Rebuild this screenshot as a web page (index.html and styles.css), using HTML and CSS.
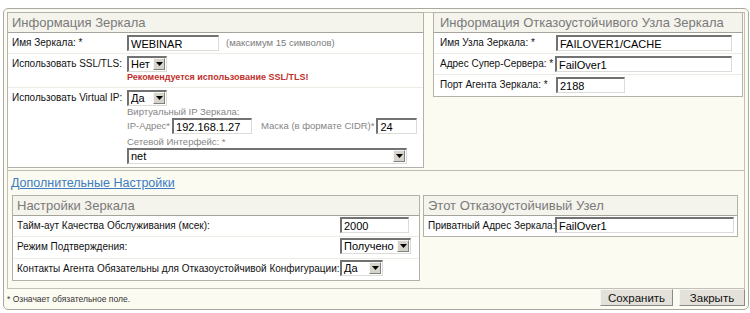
FILE: index.html
```html
<!DOCTYPE html>
<html>
<head>
<meta charset="utf-8">
<link rel="stylesheet" href="styles.css">
</head>
<body>
<div class="panel">
  <div class="box">
    <div class="top">
      <div class="fs fs-mirror">
        <div class="fs-head">Информация Зеркала</div>
        <div class="row r1">
          <div class="lbl">Имя Зеркала: *</div>
          <div class="val"><input class="inp w-name" type="text" value="WEBINAR"><span class="hint">(максимум 15 символов)</span></div>
        </div>
        <div class="row r2">
          <div class="lbl">Использовать SSL/TLS:</div>
          <div class="val">
            <span class="sel w-small"><span class="sel-txt">Нет</span><span class="sel-btn"><svg width="7" height="4" viewBox="0 0 7 4"><polygon points="0,0 7,0 3.5,4" fill="#000"/></svg></span></span>
            <div class="warn">Рекомендуется использование SSL/TLS!</div>
          </div>
        </div>
        <div class="row r3">
          <div class="lbl">Использовать Virtual IP:</div>
          <div class="val">
            <span class="sel w-small"><span class="sel-txt">Да</span><span class="sel-btn"><svg width="7" height="4" viewBox="0 0 7 4"><polygon points="0,0 7,0 3.5,4" fill="#000"/></svg></span></span>
            <div class="sub">Виртуальный IP Зеркала:</div>
            <div class="ip-line">
              <span class="sub">IP-Адрес*</span>
              <input class="inp w-ip" type="text" value="192.168.1.27">
              <span class="sub mask">Маска (в формате CIDR)*</span>
              <input class="inp w-mask" type="text" value="24">
            </div>
            <div class="sub net-lbl">Сетевой Интерфейс: *</div>
            <span class="sel w-net"><span class="sel-txt">net</span><span class="sel-btn"><svg width="7" height="4" viewBox="0 0 7 4"><polygon points="0,0 7,0 3.5,4" fill="#000"/></svg></span></span>
          </div>
        </div>
      </div>

      <div class="fs fs-failover">
        <div class="fs-head">Информация Отказоустойчивого Узла Зеркала</div>
        <div class="row">
          <div class="lbl">Имя Узла Зеркала: *</div>
          <div class="val"><input class="inp w-fo" type="text" value="FAILOVER1/CACHE"></div>
        </div>
        <div class="row">
          <div class="lbl">Адрес Супер-Сервера: *</div>
          <div class="val"><input class="inp w-fo2" type="text" value="FailOver1"></div>
        </div>
        <div class="row last">
          <div class="lbl">Порт Агента Зеркала: *</div>
          <div class="val"><input class="inp w-port" type="text" value="2188"></div>
        </div>
      </div>
    </div>

    <div class="more">
      <a class="more-link" href="#">Дополнительные Настройки</a>
      <div class="more-row">
        <div class="fs fs-settings">
          <div class="fs-head">Настройки Зеркала</div>
          <div class="row">
            <div class="lbl">Тайм-аут Качества Обслуживания (мсек):</div>
            <div class="val"><input class="inp w-port" type="text" value="2000"></div>
          </div>
          <div class="row">
            <div class="lbl">Режим Подтверждения:</div>
            <div class="val"><span class="sel w-mode"><span class="sel-txt">Получено</span><span class="sel-btn"><svg width="7" height="4" viewBox="0 0 7 4"><polygon points="0,0 7,0 3.5,4" fill="#000"/></svg></span></span></div>
          </div>
          <div class="row last">
            <div class="lbl">Контакты Агента Обязательны для Отказоустойчивой Конфигурации:</div>
            <div class="val"><span class="sel w-yes"><span class="sel-txt">Да</span><span class="sel-btn"><svg width="7" height="4" viewBox="0 0 7 4"><polygon points="0,0 7,0 3.5,4" fill="#000"/></svg></span></span></div>
          </div>
        </div>

        <div class="fs fs-node">
          <div class="fs-head">Этот Отказоустойчивый Узел</div>
          <div class="row last">
            <div class="lbl">Приватный Адрес Зеркала:</div>
            <div class="val"><input class="inp w-priv" type="text" value="FailOver1"></div>
          </div>
        </div>
      </div>
    </div>
  </div>

  <div class="foot">
    <div class="note">* Означает обязательное поле.</div>
    <div class="buttons">
      <button class="btn btn-save">Сохранить</button>
      <button class="btn btn-close">Закрыть</button>
    </div>
  </div>
</div>
</body>
</html>
```

FILE: styles.css
```css
body {
    margin: 0;
    background: #fff;
    font-family: "Liberation Sans", Arial, sans-serif;
    font-size: 10px;
    color: #111;
}

.panel {
    margin: 8px 1px 0 3px;
    height: 302px;
    box-sizing: border-box;
    border: 1px solid #a9a9a2;
    border-radius: 5px;
    background: #fcfbf1;
    padding: 3px 3px 0 3px;
    display: flex;
    flex-direction: column;
}

.box {
    height: 277px;
    box-sizing: border-box;
    border: 1px solid #c3c1b5;
}

.top {
    height: 158px;
    box-sizing: border-box;
    border-bottom: 1px solid #bdbbb0;
    display: flex;
    align-items: flex-start;
}

/* fieldsets */
.fs {
    box-sizing: border-box;
    border: 1px solid #b3b2aa;
    background: #fff;
}

.fs-head {
    height: 19px;
    line-height: 19px;
    padding-left: 4px;
    font-size: 13px;
    color: #7a7a7a;
    background: #f4f3ec;
    border-bottom: 1px solid #a4a39c;
    white-space: nowrap;
}

.row {
    display: flex;
    border-bottom: 1px solid #ecebe4;
    height: 20px;
}

.row.last {
    border-bottom: none;
}

.lbl {
    box-sizing: border-box;
    padding: 2px 0 0 4px;
    line-height: 16px;
    white-space: nowrap;
    flex: none;
}

.val {
    padding-top: 2px;
    display: flex;
    flex-direction: column;
    align-items: flex-start;
}

.fs-mirror {
    width: 417px;
    height: 156px;
    margin: -1px 0 0 -1px;
}

.fs-mirror .lbl {
    width: 119px;
}

.fs-mirror .r1 .val {
    flex-direction: row;
}

.fs-mirror .r2 {
    height: 33px;
}

.fs-mirror .r3 {
    height: 79px;
    border-bottom: none;
}

.fs-failover {
    width: 310px;
    height: 85px;
    margin: -1px 0 0 9px;
}

.fs-failover .fs-head {
    padding-left: 6px;
}

.fs-failover .lbl {
    width: 122px;
    padding-left: 6px;
}

.fs-failover .row.last {
    height: 21px;
}

/* inputs */
.inp {
    box-sizing: border-box;
    height: 16px;
    margin: 0;
    padding: 0 0 0 2px;
    border-style: solid;
    border-width: 2px 1px 1px 2px;
    border-color: #727272 #dcdcd6 #dcdcd6 #727272;
    background: #fff;
    font-family: "Liberation Sans", Arial, sans-serif;
    font-size: 11px;
    color: #000;
    outline: none;
}

.w-name { width: 92px; }
.w-ip { width: 80px; }
.w-mask { width: 41px; }
.w-fo { width: 176px; }
.w-fo2 { width: 177px; margin-left: -1px; }
.w-port { width: 69px; }
.w-priv { width: 179px; }

.hint {
    margin-left: 7px;
    line-height: 16px;
    font-size: 9.5px;
    color: #7c7c7c;
}

/* select boxes */
.sel {
    box-sizing: border-box;
    height: 16px;
    display: inline-flex;
    align-items: stretch;
    border-style: solid;
    border-width: 2px 1px 1px 2px;
    border-color: #727272 #dcdcd6 #dcdcd6 #727272;
    background: #fff;
    font-size: 11px;
    color: #000;
}

.sel-txt {
    flex: 1;
    padding-left: 2px;
    line-height: 13px;
    white-space: nowrap;
}

.sel-btn {
    box-sizing: border-box;
    width: 12px;
    margin: 0 1px 1px 0;
    background: #d6d3cb;
    border: 1px solid;
    border-color: #f6f6f4 #808080 #808080 #f6f6f4;
    display: flex;
    align-items: center;
    justify-content: center;
}

.w-small { width: 40px; }
.w-net { width: 280px; }
.w-mode { width: 71px; }
.w-yes { width: 43px; }

.warn {
    line-height: 11px;
    font-size: 9px;
    font-weight: bold;
    color: #c0312c;
    white-space: nowrap;
}

.sub {
    line-height: 12px;
    font-size: 9.5px;
    color: #858585;
    white-space: nowrap;
}

.ip-line {
    display: flex;
    align-items: center;
    height: 16px;
}

.ip-line .inp {
    margin-left: 2px;
}

.mask {
    margin-left: 9px;
}

.net-lbl {
    margin-top: 2px;
}

/* advanced section */
.more {
    height: 117px;
}

.more-link {
    display: block;
    padding: 5px 0 0 3px;
    line-height: 15px;
    font-size: 12.5px;
    color: #3b7cc4;
    text-decoration: underline;
}

.more-row {
    display: flex;
    align-items: flex-start;
    margin-top: 4px;
}

.fs-settings {
    width: 408px;
    height: 86px;
    margin-left: 4px;
}

.fs-settings .lbl {
    width: 327px;
}

.fs-settings .val {
    padding-top: 1px;
}

.fs-settings .row {
    height: 21px;
}

.fs-settings .row:nth-child(2) {
    height: 20px;
}

.fs-node {
    width: 315px;
    height: 42px;
    margin-left: 3px;
}

.fs-node .lbl {
    width: 131px;
}

.fs-node .val {
    padding-top: 1px;
}

/* footer */
.foot {
    display: flex;
    justify-content: space-between;
    align-items: flex-start;
    height: 20px;
}

.note {
    padding-top: 5px;
    line-height: 10px;
    font-size: 8.5px;
    color: #333;
}

.buttons {
    display: flex;
    gap: 6px;
}

.btn {
    box-sizing: border-box;
    height: 17px;
    padding: 0;
    border: 1px solid;
    border-color: #f5f5f2 #8a8a86 #8a8a86 #f5f5f2;
    background: #e3e1d9;
    font-family: "Liberation Sans", Arial, sans-serif;
    font-size: 11.5px;
    color: #111;
    cursor: pointer;
}

.btn-save { width: 73px; }
.btn-close { width: 66px; }
```
